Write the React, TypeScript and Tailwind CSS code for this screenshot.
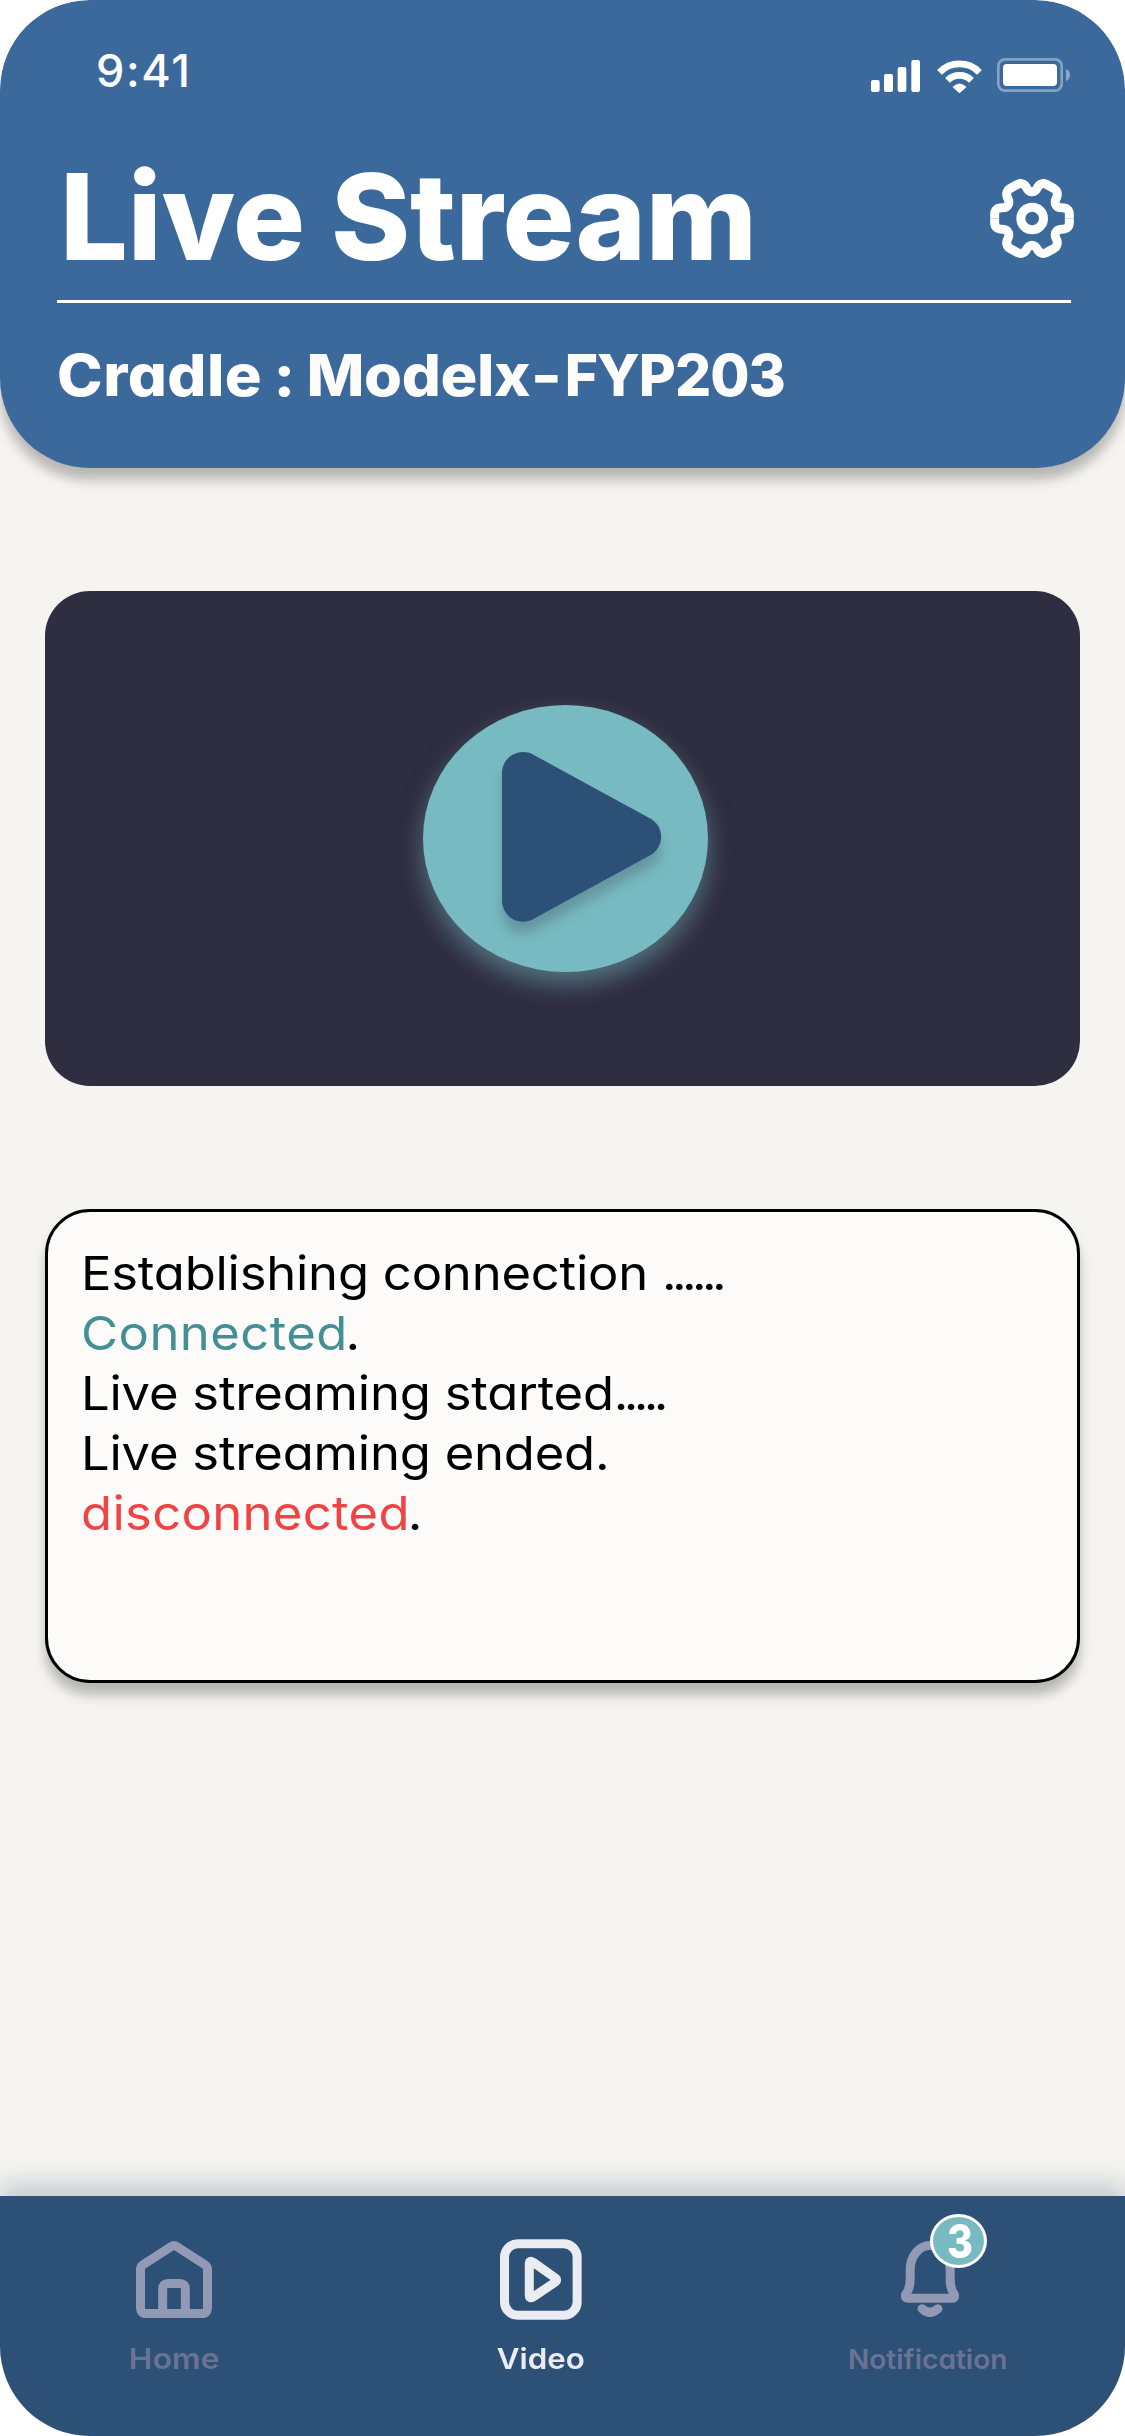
import type { ReactNode } from 'react';

const SignalIcon = () => (
  <svg className="h-8 w-[41px]" viewBox="0 0 123 96" fill="#fff">
    <rect x="0" y="60" width="26" height="36" rx="6" />
    <rect x="39" y="42" width="27" height="54" rx="6" />
    <rect x="80" y="21" width="26" height="75" rx="6" />
    <rect x="121" y="0" width="26" height="96" rx="6" />
  </svg>
);

const WifiIcon = () => (
  <svg className="h-[33px] w-[45px]" viewBox="262 60 134 99" fill="none" stroke="#fff" strokeWidth="20">
    <path d="M269 97 A84 84 0 0 1 389 97" />
    <path d="M293 121 A51 51 0 0 1 365 121" />
    <path d="M308 141 Q329 120 350 141 L329 160Z" fill="#fff" stroke="none" />
  </svg>
);

const BatteryIcon = () => (
  <svg className="h-[34px] w-[73px]" viewBox="441 54 219 102" fill="none">
    <rect x="445" y="58" width="190" height="94" rx="20" stroke="#fff" strokeOpacity=".38" strokeWidth="8" />
    <rect x="459" y="72" width="162" height="66" rx="11" fill="#fff" />
    <path d="M648 87 Q660 92 660 105 Q660 118 648 123Z" fill="#fff" fillOpacity=".42" />
  </svg>
);

const gearQuarter =
  'M216 125 C205 125 202 117 198 110 C193 100 182 98 172 103 L150 115 C140 121 138 132 142 141 C150 155 148 173 126 173 C111 173 104 180 104 192 L104 205';

const GearIcon = () => (
  <svg className="h-[79px] w-[84px]" viewBox="90 87 252 236" fill="none" stroke="#fff" strokeWidth="27" strokeLinejoin="round">
    <path d={gearQuarter} />
    <path d={gearQuarter} transform="translate(432 0) scale(-1 1)" />
    <path d={gearQuarter} transform="translate(0 410) scale(1 -1)" />
    <path d={gearQuarter} transform="translate(432 410) scale(-1 -1)" />
    <circle cx="216.500" cy="205" r="34" />
  </svg>
);

const HomeIcon = () => (
  <svg className="h-[77px] w-[76px]" viewBox="408 243 228 230" fill="none" stroke="#9299b5" strokeWidth="27">
    <path d="M421.500 328 Q421.500 319 429 314 L514 259 Q522 254 530 259 L615 314 Q622.500 319 622.500 328 V442 Q622.500 460 605 460 H439 Q421.500 460 421.500 442Z" />
    <path d="M488 460 V386 Q488 370 504 370 H540 Q556 370 556 386 V460" />
  </svg>
);

const VideoIcon = () => (
  <svg className="h-[81px] w-[82px]" viewBox="298 178 245 241" fill="none" stroke="#ebecf1" strokeWidth="27" strokeLinejoin="round">
    <rect x="311.500" y="192" width="217" height="213.500" rx="40" />
    <path d="M385.500 252 Q386 240 397 247 L462 293 Q472 300 462 307 L397 351 Q386 357 385.500 346Z" />
  </svg>
);

const BellIcon = () => (
  <svg className="h-[76px] w-[58px]" viewBox="303 185 174 228" fill="none" stroke="#9299b5" strokeWidth="27" strokeLinecap="round" strokeLinejoin="round">
    <path d="M390 198.500 C357 198.500 330.500 231 330.500 272 V300 C330.500 320 326 332 319 342 C313 350 317 357 324 357 H456 C463 357 467 350 461 342 C454 332 450.500 320 450.500 300 V272 C450.500 231 423 198.500 390 198.500Z" />
    <path d="M366 388 Q390 410 414 388" />
  </svg>
);

function NavItem({
  icon,
  label,
  className,
  labelClass,
}: {
  icon: ReactNode;
  label: string;
  className: string;
  labelClass: string;
}) {
  return (
    <div className={`flex flex-col items-center ${className}`}>
      <div className="flex h-[82px] items-center">{icon}</div>
      <span className="mt-[24px] h-[30px] leading-[30px] font-semibold">
        <span className={`inline-block ${labelClass}`}>{label}</span>
      </span>
    </div>
  );
}

export default function App() {
  return (
    <div className="flex h-[2436px] w-[1125px] flex-col overflow-hidden rounded-[90px] bg-[#f5f4f0] font-['Inter',sans-serif]">
      <header className="h-[468px] shrink-0 rounded-[90px] bg-[#3c699b] text-white shadow-[0_12px_12px_rgba(0,0,0,0.25)]">
        <div className="flex h-[157px] justify-between pr-[55px] pl-[96px]">
          <span className="pt-[41px] text-[45px] leading-[60px] font-medium tracking-[1.6px]">9:41</span>
          <div className="flex pt-[58px]">
            <div className="mt-[2px] mr-[16px] w-[50px] [&>svg]:overflow-visible">
              <SignalIcon />
            </div>
            <div className="mt-[2px] mr-[15px]">
              <WifiIcon />
            </div>
            <BatteryIcon />
          </div>
        </div>
        <div className="ml-[60px] flex h-[143px] justify-between pr-[51px]">
          <h1 className="text-[120px] leading-[120px] font-extrabold tracking-[-0.2px]">Live Stream</h1>
          <div className="mt-[22px]">
            <GearIcon />
          </div>
        </div>
        <hr className="mr-[54px] ml-[57px] h-[3px] border-0 bg-white" />
        <p className="mt-[42px] ml-[57px] w-max origin-left scale-x-[1.06] text-[58px] leading-[60px] font-extrabold whitespace-pre [font-feature-settings:'cv11','calt'_0] [word-spacing:-2px]">
          <span className="tracking-[0.4px]">Cradle</span> :{' '}
          <span className="text-[#fdfcfa]">
            <span className="tracking-[-0.4px]">Modelx</span>
            <span className="mr-[3px] ml-[2px] inline-block scale-x-[1.08]">-</span>
            <span className="inline-block origin-left scale-x-[0.925] tracking-[-1px]">FYP203</span>
          </span>
        </p>
      </header>

      <main className="flex flex-1 flex-col px-[45px] pt-[123px]">
        <div className="flex h-[495px] shrink-0 rounded-[45px] bg-[#2f2d40] pt-[114px] pl-[378px]">
          <button className="flex h-[267px] w-[285px] items-start rounded-[50%] bg-[#78bac1] pt-[47px] pl-[79px] shadow-[0_12px_24px_rgba(120,186,193,0.5)]">
            <svg className="h-[170px] w-[160px] overflow-visible drop-shadow-[0_12px_6px_rgba(47,45,64,0.25)]" viewBox="365 276 480 510" fill="#2d5076">
              <path d="M365 339 A63 63 0 0 1 459 284 L811 476 A63 63 0 0 1 811 585 L459 777 A63 63 0 0 1 365 723Z" />
            </svg>
          </button>
        </div>

        <section className="mt-[123px] h-[474px] shrink-0 rounded-[45px] border-[3px] border-black bg-[#fcfbf9] pt-[31px] pl-[33px] shadow-[0_12px_12px_rgba(0,0,0,0.25)]">
          <div className="w-max origin-left scale-x-[1.08] text-[47px] leading-[60px] tracking-[-0.2px] text-black [font-feature-settings:'cv11']">
            <p>
              Establishing connection <span className="tracking-[-4.3px]">......</span>
            </p>
            <p>
              <span className="tracking-[0.4px] text-[#448f96]">Connected</span>
              <span className="-ml-[2px]">.</span>
            </p>
            <p>
              Live streaming started<span className="tracking-[-4.3px]">.....</span>
            </p>
            <p>Live streaming ended.</p>
            <p>
              <span className="tracking-[0.3px] text-[#f04444]">disconnected</span>
              <span className="-ml-[2px]">.</span>
            </p>
          </div>
        </section>
      </main>

      <nav className="flex h-[240px] shrink-0 gap-[247px] bg-[#2d5076] pt-[42px] pl-[114px] shadow-[0_-12px_24px_rgba(45,80,118,0.25)] [font-feature-settings:'cv11']">
        <NavItem
          icon={<HomeIcon />}
          label="Home"
          className="w-[120px] text-[29px] text-[#6b7394]"
          labelClass="scale-x-[1.1]"
        />
        <NavItem
          icon={<VideoIcon />}
          label="Video"
          className="w-[120px] text-[29px] text-[#ebecf1]"
          labelClass="scale-x-[1.08]"
        />
        <NavItem
          icon={
            <div className="relative ml-1">
              <BellIcon />
              <span className="absolute top-[-27px] left-[29px] flex h-[54px] w-[57px] items-center justify-center rounded-[50%] border-[3px] border-white bg-[#78bac1] pl-[3px] text-[46px] leading-none font-extrabold text-white">
                <span className="scale-x-[0.86]">3</span>
              </span>
            </div>
          }
          label="Notification"
          className="w-[160px] text-[27px] text-[#6b7394]"
          labelClass="translate-y-px scale-x-[1.04]"
        />
      </nav>
    </div>
  );
}
